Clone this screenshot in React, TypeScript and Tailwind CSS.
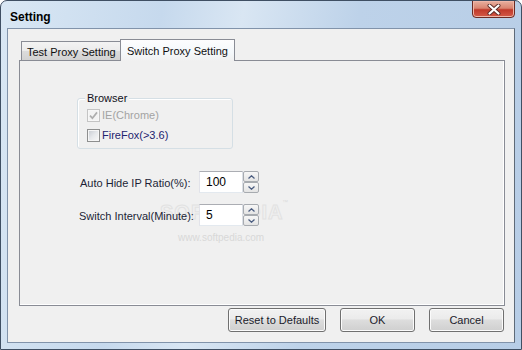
import React from 'react';

function CheckBox({ checked, disabled }: { checked?: boolean; disabled?: boolean }) {
  return (
    <span
      className={`w-[13px] h-[13px] shrink-0 border p-px flex ${
        disabled ? 'border-[#c4c4c4] bg-[#f7f7f7]' : 'border-[#8e8f8f] bg-[#f6f6f6]'
      }`}
    >
      <span
        className={`flex-1 flex items-center justify-center ${
          disabled
            ? 'bg-[#f3f3f3]'
            : 'bg-[linear-gradient(135deg,#cbcfd5_0%,#e6e8eb_50%,#f6f6f6_100%)]'
        }`}
      >
        {checked && (
          <svg width="9" height="9" viewBox="0 0 9 9">
            <path d="M1 4.6 L3.4 7.2 L8 1.4" stroke="#aeaeae" strokeWidth="1.7" fill="none" />
          </svg>
        )}
      </span>
    </span>
  );
}

function SpinButton({ up }: { up?: boolean }) {
  return (
    <div className="h-[11px] w-[16px] border border-[#a7abb0] rounded-[2px] bg-[linear-gradient(#f7f7f7,#e4e4e4)] flex items-center justify-center">
      <svg width="7" height="4" viewBox="0 0 7 4">
        <path
          d={up ? 'M0.5 3.5 L3.5 0.8 L6.5 3.5' : 'M0.5 0.5 L3.5 3.2 L6.5 0.5'}
          stroke="#4b5d80"
          strokeWidth="1.3"
          fill="none"
        />
      </svg>
    </div>
  );
}

function NumberBox({ value }: { value: string }) {
  return (
    <div className="flex">
      <div className="w-[44px] h-[22px] border border-[#abadb3] border-r-[#dbdfe6] border-b-[#e3e9ef] border-l-[#e2e3ea] bg-white pl-[6px] flex items-center text-[12px] text-black">
        {value}
      </div>
      <div className="flex flex-col">
        <SpinButton up />
        <SpinButton />
      </div>
    </div>
  );
}

function DialogButton({ label, width }: { label: string; width: string }) {
  return (
    <button
      className={`${width} h-[24px] rounded-[3px] border border-[#707070] bg-[linear-gradient(#f2f2f2_0%,#ebebeb_45%,#dddddd_50%,#cfcfcf_100%)] shadow-[inset_0_0_0_1px_#fbfbfb] text-[11px] text-[#1b1b2b] flex items-center justify-center`}
    >
      {label}
    </button>
  );
}

export default function App() {
  return (
    <div className="w-[522px] h-[350px] flex flex-col overflow-hidden rounded-t-[7px] border border-[#3f4f63] bg-[linear-gradient(100deg,#d9e7f4_0%,#c6d9ed_28%,#d9e6f3_42%,#bdd2e9_62%,#b7cde6_100%)] font-[family-name:Liberation_Sans,Arial,sans-serif]">
      {/* Title bar */}
      <div className="h-[27px] shrink-0 flex items-start justify-between">
        <span className="pl-[9px] pt-[9px] text-[12px] font-bold leading-[14px] text-black">Setting</span>
        <div className="mr-[6px] w-[43px] h-[18px] -mt-px rounded-b-[4px] border border-[#6b2b24] bg-[linear-gradient(#e8b0a0_0%,#d98470_45%,#c0392a_55%,#d45a48_100%)] shadow-[inset_0_0_0_1px_#efb6a8] flex items-center justify-center">
          <svg width="14" height="11" viewBox="0 0 14 11">
            <path d="M2.5 1.5 L11.5 9.5 M11.5 1.5 L2.5 9.5" stroke="#5a2a26" strokeWidth="4" strokeLinecap="round" />
            <path d="M2.5 1.5 L11.5 9.5 M11.5 1.5 L2.5 9.5" stroke="#ffffff" strokeWidth="2.2" strokeLinecap="round" />
          </svg>
        </div>
      </div>

      {/* Client area */}
      <div className="flex-1 mx-[6px] mb-[6px] border border-[#8193aa] border-r-[#5e6a78] bg-[#f0f0f0] flex flex-col pt-[10px] pl-[11px] pr-[9px] text-[11px]">
        {/* Tabs */}
        <div className="flex items-end pl-[2px] h-[21px] relative z-10">
          <div className="w-[99px] h-[19px] border border-b-0 border-r-0 border-[#898c95] bg-[linear-gradient(#f3f3f3,#ebebeb_50%,#dcdcdc_50%,#d2d2d2)] pl-[5px] pt-[2px] text-[#101010] text-[11px]">
            Test Proxy Setting
          </div>
          <div className="w-[115px] h-[22px] -mb-px border border-b-0 border-[#898c95] bg-[linear-gradient(#fdfdfe,#f4f8fb_60%,#f0f0f0)] pl-[6px] pt-[3px] text-[#101010] text-[11px]">
            Switch Proxy Setting
          </div>
        </div>

        {/* Tab panel */}
        <div className="relative h-[246px] border border-[#898c95] shadow-[inset_-1px_0_0_#ffffff,inset_0_-1px_0_#ffffff] bg-[#f0f0f0] flex flex-col pl-[57px] pt-[37px]">
          {/* watermark */}
          <span className="absolute left-[140px] top-[140px] text-[20px] leading-[22px] font-bold tracking-[1px] text-transparent [-webkit-text-stroke:1px_#e2e2e2] pointer-events-none">
            SOFTPEDIA
          </span>
          <span className="absolute left-[262px] top-[137px] text-[6px] text-[#dcdcdc] pointer-events-none">™</span>
          <span className="absolute left-[158px] top-[171px] text-[10px] leading-[11px] text-[#d8d8d8] pointer-events-none">
            www.softpedia.com
          </span>

          {/* Browser group */}
          <div className="relative w-[156px] h-[51px] rounded-[3px] border border-[#d5dfe5] shadow-[inset_1px_1px_0_#ffffff] pl-[9px] pt-[6px] flex flex-col">
            <span className="absolute left-[7px] -top-[7px] px-[2px] bg-[#f0f0f0] leading-[13px] text-[11px] text-[#101020]">
              Browser
            </span>
            <div className="h-[20px] flex items-center gap-[2px] text-[#a3a3a3]">
              <CheckBox checked disabled />
              <span>IE(Chrome)</span>
            </div>
            <div className="h-[20px] flex items-center gap-[2px] text-[#23236f]">
              <CheckBox />
              <span>FireFox(&gt;3.6)</span>
            </div>
          </div>

          {/* Auto hide ratio */}
          <div className="relative mt-[22px] ml-[3px] flex items-center">
            <span className="w-[119px] pt-[3px] text-[#1c1f36]">Auto Hide IP Ratio(%):</span>
            <NumberBox value="100" />
          </div>

          {/* Switch interval */}
          <div className="relative mt-[11px] ml-[2px] flex items-center">
            <span className="w-[120px] pt-[3px] text-[#1c1f36]">Switch Interval(Minute):</span>
            <NumberBox value="5" />
          </div>
        </div>

        {/* Buttons */}
        <div className="mt-[2px] flex justify-end gap-[14px] pr-px">
          <DialogButton label="Reset to Defaults" width="w-[98px]" />
          <DialogButton label="OK" width="w-[75px]" />
          <DialogButton label="Cancel" width="w-[75px]" />
        </div>
      </div>
    </div>
  );
}
